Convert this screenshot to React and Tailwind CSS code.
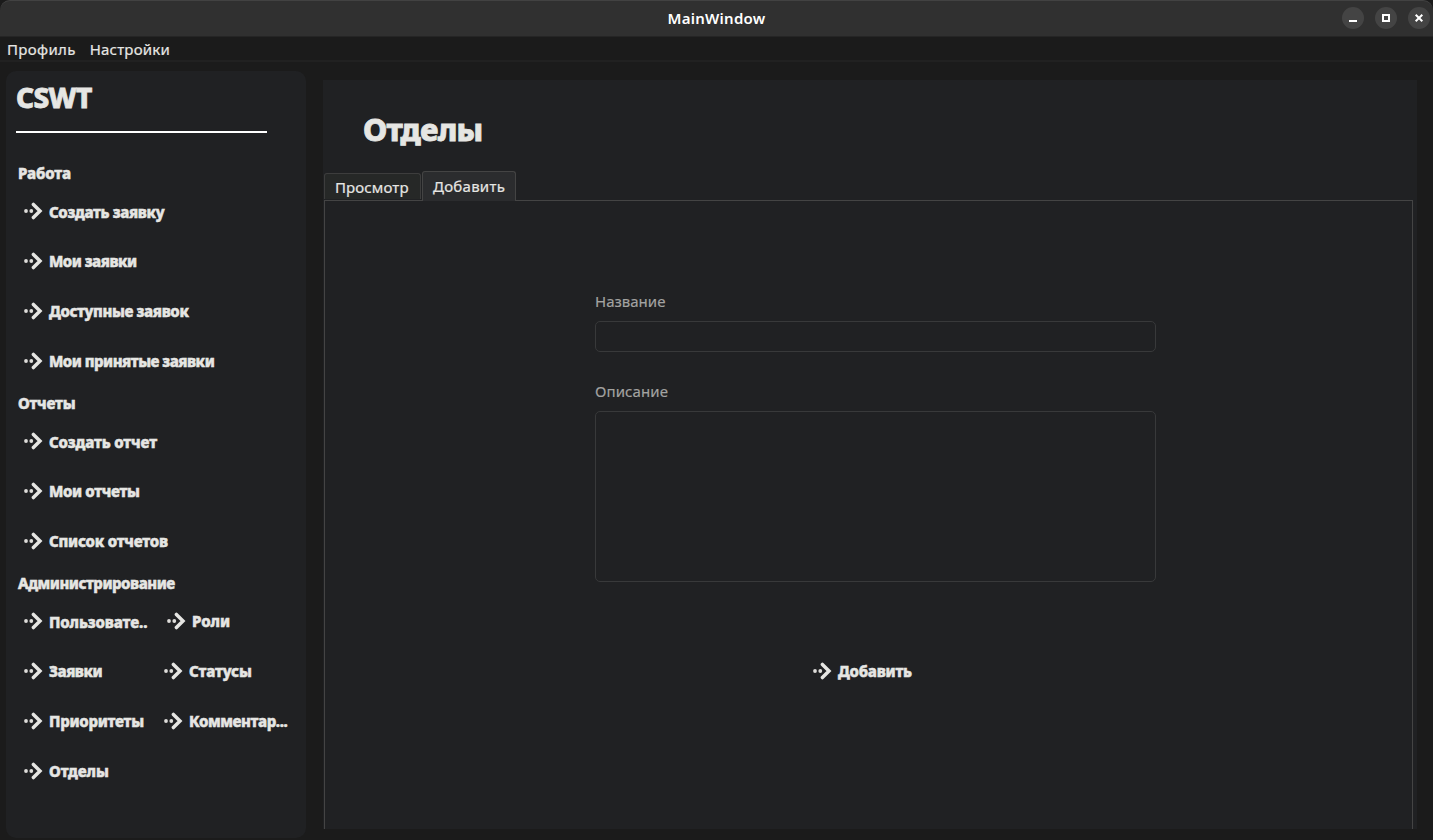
const work = [
  ['Создать заявку', 'tracking-[-0.35px]'],
  ['Мои заявки', 'tracking-[-0.5px]'],
  ['Доступные заявок', 'tracking-[-0.37px]'],
  ['Мои принятые заявки', 'tracking-[-0.5px]'],
];
const reports = [
  ['Создать отчет', 'tracking-[-0.15px]'],
  ['Мои отчеты', 'tracking-[-0.35px]'],
  ['Список отчетов', 'tracking-[-0.22px]'],
];

function Arrow() {
  return (
    <svg className="block h-[18px] w-[20px] shrink-0" viewBox="0 0 20 18" fill="none">
      <circle cx="3" cy="9" r="1.9" fill="#deddda" />
      <circle cx="8.3" cy="9" r="1.9" fill="#deddda" />
      <path d="M10.4 2.4 L17 9 L10.4 15.6" stroke="#e6e6e3" strokeWidth="3.5" strokeLinecap="round" strokeLinejoin="miter" />
    </svg>
  );
}

function NavButton({ label, tracking = 'tracking-[-0.5px]' }) {
  return (
    <button className="flex items-center gap-[6px] whitespace-nowrap pl-[7px] text-[15px] leading-5 font-extrabold text-[#e6e6e3]">
      <span className="-mt-px"><Arrow /></span>
      <span className={`${tracking} [-webkit-text-stroke:0.5px_#e6e6e3]`}>{label}</span>
    </button>
  );
}

function Section({ title, tracking, children }) {
  return (
    <section>
      <h2 className={`h-[31px] pt-[7px] pl-[2px] text-[15px] leading-5 font-extrabold [-webkit-text-stroke:0.5px_#e6e6e3] ${tracking}`}>{title}</h2>
      {children}
    </section>
  );
}

function List({ items }) {
  return (
    <div className="grid auto-rows-[50px] grid-rows-[49px]">
      {items.map(([label, tracking]) => (
        <NavButton key={label} label={label} tracking={tracking} />
      ))}
    </div>
  );
}

function WindowButton({ children }) {
  return (
    <button className="flex size-[22px] items-center justify-center rounded-full bg-[#444444]">
      <svg className="size-[22px]" viewBox="0 0 22 22" fill="none" stroke="#ffffff" strokeWidth="2">{children}</svg>
    </button>
  );
}

export default function App() {
  return (
    <div className="h-[840px] w-[1433px] overflow-hidden bg-[#1b1b1b] font-['Noto_Sans',sans-serif] text-[#e6e6e3]">
      <div className="flex h-[840px] flex-col">
        <header className="grid h-[37px] shrink-0 grid-cols-[1fr_auto_1fr] items-center rounded-t-[10px] border-t border-b border-t-[#424242] border-b-[#252525] bg-[#303030] pb-[2px]">
          <span />
          <h1 className="text-[15px] leading-5 font-semibold tracking-[0.25px] text-white">MainWindow</h1>
          <div className="flex justify-end gap-[11px] pr-[3px]">
            <WindowButton><path d="M7 14h8" /></WindowButton>
            <WindowButton><path d="M8 8h6v6H8z" /></WindowButton>
            <WindowButton><path d="M7.7 7.7l6.6 6.6M14.3 7.7l-6.6 6.6" /></WindowButton>
          </div>
        </header>
        <nav className="flex h-[25px] shrink-0 gap-[14px] border-b-2 border-[#212121] pl-[7px] text-[15px] leading-[25px] [-webkit-text-stroke:0.2px_#e6e6e3]">
          <span className="tracking-[0.33px]">Профиль</span>
          <span className="tracking-[0.2px]">Настройки</span>
        </nav>
        <div className="flex min-h-0 flex-1 gap-[17px] pl-[6px]">
          <aside className="mt-[9px] h-[767px] w-[300px] shrink-0 rounded-[10px] bg-[#202123] px-[10px]">
            <div className="flex h-[62px] w-[251px] items-start border-b-2 border-white pt-[8px]">
              <span className="text-[28px] leading-9 font-extrabold tracking-[-0.6px] [-webkit-text-stroke:0.8px_#e6e6e3]">CSWT</span>
            </div>
            <div className="pt-[23px]">
              <Section title="Работа" tracking="tracking-[-0.15px]"><List items={work} /></Section>
              <Section title="Отчеты" tracking="tracking-[-0.25px]"><List items={reports} /></Section>
              <Section title="Администрирование" tracking="tracking-[-0.47px]">
                <div className="grid auto-rows-[50px] grid-cols-[140px_1fr] grid-rows-[49px]">
                  <NavButton label="Пользовате.." tracking="tracking-[-0.12px]" />
                  <div className="grid pb-px pl-[3px]"><NavButton label="Роли" tracking="tracking-[-0.05px]" /></div>
                  <NavButton label="Заявки" />
                  <NavButton label="Статусы" tracking="tracking-[-0.15px]" />
                  <NavButton label="Приоритеты" tracking="tracking-[-0.25px]" />
                  <NavButton label="Комментар..." tracking="tracking-[-0.4px]" />
                  <NavButton label="Отделы" tracking="tracking-[-0.05px]" />
                </div>
              </Section>
            </div>
          </aside>
          <main className="mt-[18px] flex h-[749px] w-[1094px] flex-col bg-[#202123] pr-[4px] pl-px">
            <h2 className="h-[91px] pt-[27px] pl-[39px] text-[31px] leading-[44px] font-extrabold tracking-[-0.85px] [-webkit-text-stroke:0.8px_#e6e6e3]">Отделы</h2>
            <div className="flex h-[29px] shrink-0 items-end gap-px text-[15px] leading-5 [-webkit-text-stroke:0.2px_#e6e6e3]">
              <div className="mb-px h-[26px] w-[97px] rounded-t-[3px] border border-b-0 border-[#3d3d3d] bg-[#262827] pt-[3px] pl-[10px] tracking-[0.1px]">Просмотр</div>
              <div className="relative -mb-px h-[30px] w-[94px] rounded-t-[3px] border border-b-0 border-[#444444] bg-[#2b2c2e] pt-[4px] pl-[10px] tracking-[0.25px]">Добавить</div>
            </div>
            <div className="flex flex-1 flex-col border border-b-0 border-[#444444] pl-[270px]">
              <div className="flex h-[120px] w-[561px] flex-col justify-end pb-[10px] text-[15px] leading-5 text-[#a3a3a1] [-webkit-text-stroke:0.15px_#a3a3a1]">Название</div>
              <input className="h-[31px] w-[561px] shrink-0 rounded-[5px] border border-[#38393a] bg-transparent outline-none" />
              <div className="flex h-[59px] w-[561px] flex-col justify-end pb-[10px] text-[15px] leading-5 tracking-[0.1px] text-[#a3a3a1] [-webkit-text-stroke:0.15px_#a3a3a1]">Описание</div>
              <textarea className="h-[171px] w-[561px] shrink-0 resize-none rounded-[5px] border border-[#38393a] bg-transparent outline-none" />
              <div className="mt-[64px] grid h-[50px] w-[561px] pl-[210px]"><NavButton label="Добавить" tracking="tracking-[-0.25px]" /></div>
            </div>
          </main>
        </div>
      </div>
    </div>
  );
}
